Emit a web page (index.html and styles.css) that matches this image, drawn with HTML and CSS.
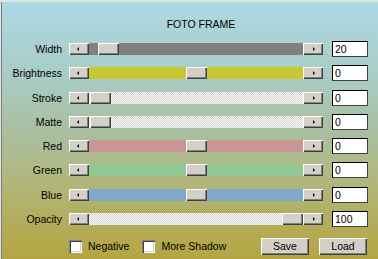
FILE: index.html
```html
<!DOCTYPE html>
<html lang="en">
<head>
    <meta charset="UTF-8">
    <title>Foto Frame</title>
    <link rel="stylesheet" href="styles.css">
</head>
<body>
    <div class="panel">
        <div class="title">FOTO FRAME</div>

        <div class="rows">
            <div class="row">
                <label class="label">Width</label>
                <div class="scroll">
                    <span class="sbtn"><i class="arrow left"></i></span>
                    <span class="track gray"><span class="thumb" style="left: calc((100% - 21px) * 0.047)"></span></span>
                    <span class="sbtn"><i class="arrow right"></i></span>
                </div>
                <input class="field" type="text" value="20">
            </div>
            <div class="row">
                <label class="label">Brightness</label>
                <div class="scroll">
                    <span class="sbtn"><i class="arrow left"></i></span>
                    <span class="track yellow"><span class="thumb" style="left: calc((100% - 21px) * 0.5)"></span></span>
                    <span class="sbtn"><i class="arrow right"></i></span>
                </div>
                <input class="field" type="text" value="0">
            </div>
            <div class="row">
                <label class="label">Stroke</label>
                <div class="scroll">
                    <span class="sbtn"><i class="arrow left"></i></span>
                    <span class="track dither"><span class="thumb" style="left: calc((100% - 21px) * 0.005)"></span></span>
                    <span class="sbtn"><i class="arrow right"></i></span>
                </div>
                <input class="field" type="text" value="0">
            </div>
            <div class="row">
                <label class="label">Matte</label>
                <div class="scroll">
                    <span class="sbtn"><i class="arrow left"></i></span>
                    <span class="track dither"><span class="thumb" style="left: calc((100% - 21px) * 0.005)"></span></span>
                    <span class="sbtn"><i class="arrow right"></i></span>
                </div>
                <input class="field" type="text" value="0">
            </div>
            <div class="row">
                <label class="label">Red</label>
                <div class="scroll">
                    <span class="sbtn"><i class="arrow left"></i></span>
                    <span class="track red"><span class="thumb" style="left: calc((100% - 21px) * 0.5)"></span></span>
                    <span class="sbtn"><i class="arrow right"></i></span>
                </div>
                <input class="field" type="text" value="0">
            </div>
            <div class="row">
                <label class="label">Green</label>
                <div class="scroll">
                    <span class="sbtn"><i class="arrow left"></i></span>
                    <span class="track green"><span class="thumb" style="left: calc((100% - 21px) * 0.5)"></span></span>
                    <span class="sbtn"><i class="arrow right"></i></span>
                </div>
                <input class="field" type="text" value="0">
            </div>
            <div class="row">
                <label class="label">Blue</label>
                <div class="scroll">
                    <span class="sbtn"><i class="arrow left"></i></span>
                    <span class="track blue"><span class="thumb" style="left: calc((100% - 21px) * 0.5)"></span></span>
                    <span class="sbtn"><i class="arrow right"></i></span>
                </div>
                <input class="field" type="text" value="0">
            </div>
            <div class="row">
                <label class="label">Opacity</label>
                <div class="scroll">
                    <span class="sbtn"><i class="arrow left"></i></span>
                    <span class="track dither"><span class="thumb" style="left: calc((100% - 21px) * 1)"></span></span>
                    <span class="sbtn"><i class="arrow right"></i></span>
                </div>
                <input class="field" type="text" value="100">
            </div>
        </div>

        <div class="footer">
            <span class="check"><span class="box"></span>Negative</span>
            <span class="check"><span class="box"></span>More Shadow</span>
            <div class="buttons">
                <button class="btn">Save</button>
                <button class="btn">Load</button>
            </div>
        </div>
    </div>
</body>
</html>
```

FILE: styles.css
```css
body {
    margin: 0;
    font-family: 'Liberation Sans', Arial, sans-serif;
    font-size: 10.5px;
    color: #000;
}

.panel {
    width: 378px;
    height: 259px;
    box-sizing: border-box;
    border-top: 1px solid #e4e4e4;
    box-shadow: inset 1px 1px 0 #e4e4e4, inset 2px 0 0 #7c7c7c;
    background: linear-gradient(to bottom, #acd9e5 0%, #a9cdc6 28%, #a9c0a4 48%, #b0b880 68%, #b3aa52 90%, #b5a644 100%);
    padding-top: 17px;
}

.title {
    text-align: center;
    line-height: 13px;
    padding-left: 24px;
}

.rows {
    margin-top: 5.85px;
}

.row {
    display: flex;
    align-items: center;
    height: 24.3px;
}

.label {
    width: 62px;
    text-align: right;
    margin-right: 7px;
}

.scroll {
    display: flex;
    width: 254px;
    height: 12px;
}

.sbtn,
.thumb {
    box-sizing: border-box;
    width: 20px;
    height: 12px;
    background: #d4d0c8;
    box-shadow: inset 1px 1px 0 #fff, inset -1px -1px 0 #404040, inset -2px -2px 0 #808080;
    display: flex;
    align-items: center;
    justify-content: center;
}

.thumb {
    width: 21px;
    position: absolute;
    top: 0;
}

.arrow {
    width: 0;
    height: 0;
    border-top: 2px solid transparent;
    border-bottom: 2px solid transparent;
}

.arrow.left {
    border-right: 2px solid #000;
    margin-right: 3px;
}

.arrow.right {
    border-left: 2px solid #000;
    margin-left: 1px;
}

.track {
    flex: 1;
    position: relative;
}

.gray { background: #808080; }
.yellow { background: #c9c832; }
.red { background: #c99595; }
.green { background: #93c793; }
.blue { background: #7fa8c9; }

.dither {
    background: repeating-conic-gradient(#ffffff 0 25%, #d4d0c8 0 50%) 0 0 / 2px 2px;
}

.field {
    box-sizing: border-box;
    width: 36px;
    height: 16px;
    margin: 0 0 0 9px;
    padding: 0 2px;
    border: 1px solid #000;
    border-right-color: #404040;
    border-bottom-color: #404040;
    background: #fff;
    font: inherit;
    color: #000;
    outline: none;
}

.footer {
    display: flex;
    align-items: center;
    height: 30px;
    padding-left: 69px;
}

.check {
    display: flex;
    align-items: center;
    margin-right: 13px;
}

.box {
    box-sizing: border-box;
    width: 13px;
    height: 13px;
    margin-right: 6px;
    background: #fff;
    box-shadow: inset 1px 1px 0 #808080, inset 2px 2px 0 #404040, inset -1px -1px 0 #fff, inset -2px -2px 0 #d4d0c8;
}

.buttons {
    display: flex;
    gap: 10px;
    margin-left: auto;
    margin-right: 11px;
}

.btn {
    box-sizing: border-box;
    width: 48px;
    height: 17px;
    padding: 0;
    border: none;
    background: #d4d0c8;
    box-shadow: inset 1px 1px 0 #fff, inset -1px -1px 0 #404040, inset -2px -2px 0 #808080;
    font: inherit;
    color: #000;
}
```
